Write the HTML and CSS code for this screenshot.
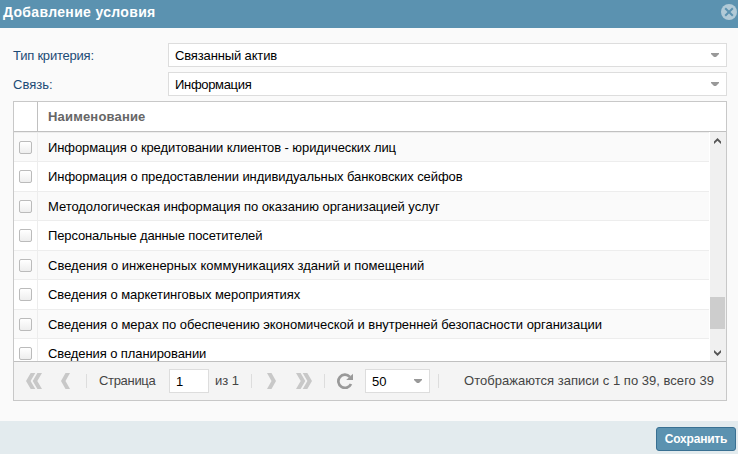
FILE: index.html
```
<!DOCTYPE html>
<html lang="ru">
<head>
<meta charset="utf-8">
<title>Добавление условия</title>
<link rel="stylesheet" href="styles.css">
</head>
<body>
<header class="titlebar">
  <h1>Добавление условия</h1>
  <svg class="close" width="16" height="16" viewBox="0 0 16 16"><circle cx="8" cy="8" r="8" fill="#b1cad7"/><path d="M4.2 4.2l7.6 7.6M11.8 4.2l-7.6 7.6" stroke="#5b92b0" stroke-width="2"/></svg>
</header>
<main class="content">
  <div class="field"><label class="t22">Тип критерия:</label><div class="combo"><span class="t13">Связанный актив</span><svg width="8" height="4"><path d="M0 0h8v1L5 4H3L0 1z" fill="#999"/></svg></div></div>
  <div class="field"><label>Связь:</label><div class="combo"><span class="t30">Информация</span><svg width="8" height="4"><path d="M0 0h8v1L5 4H3L0 1z" fill="#999"/></svg></div></div>
  <section class="grid">
    <div class="grid-head"><div class="head-check"></div><div class="head-name">Наименование</div></div>
    <div class="grid-view">
      <div class="rows">
        <div class="row alt"><div class="check"><i></i></div><div class="name t09">Информация о кредитовании клиентов - юридических лиц</div></div>
        <div class="row tall"><div class="check"><i></i></div><div class="name t07">Информация о предоставлении индивидуальных банковских сейфов</div></div>
        <div class="row alt"><div class="check"><i></i></div><div class="name t05">Методологическая информация по оказанию организацией услуг</div></div>
        <div class="row tall"><div class="check"><i></i></div><div class="name t13">Персональные данные посетителей</div></div>
        <div class="row alt"><div class="check"><i></i></div><div class="name">Сведения о инженерных коммуникациях зданий и помещений</div></div>
        <div class="row tall"><div class="check"><i></i></div><div class="name t05">Сведения о маркетинговых мероприятиях</div></div>
        <div class="row alt"><div class="check"><i></i></div><div class="name t03">Сведения о мерах по обеспечению экономической и внутренней безопасности организации</div></div>
        <div class="row tall"><div class="check"><i></i></div><div class="name t09">Сведения о планировании</div></div>
      </div>
      <div class="scroll">
        <svg width="7" height="6"><path d="M0 6V3.5L3.5 0 7 3.5V6L3.5 2.8z" fill="#555"/></svg>
        <div class="thumb"></div>
        <svg width="7" height="6"><path d="M0 0V2.5L3.5 6 7 2.5V0L3.5 3.2z" fill="#555"/></svg>
      </div>
    </div>
    <div class="pager">
      <svg class="first" width="16" height="16"><path d="M4.7 0h4.6L4.6 8l4.7 8H4.7L0 8zM11.4 0H16l-4.7 8 4.7 8h-4.6L6.7 8z" fill="#c8c8c8"/></svg>
      <svg class="prev" width="9" height="16"><path d="M4.5 0H9L4.5 8 9 16H4.5L0 8z" fill="#c8c8c8"/></svg>
      <span class="sep s1"></span>
      <span class="page-label t30">Страница</span>
      <div class="page">1</div>
      <span class="of">из 1</span>
      <span class="sep s2"></span>
      <svg class="next" width="9" height="16"><path d="M0 0h4.5L9 8l-4.5 8H0l4.5-8z" fill="#c8c8c8"/></svg>
      <svg class="last" width="16" height="16"><path d="M0 0h4.6l4.7 8-4.7 8H0l4.7-8zM6.7 0h4.6L16 8l-4.7 8H6.7l4.7-8z" fill="#c8c8c8"/></svg>
      <span class="sep s3"></span>
      <svg class="refresh" width="16" height="16"><path d="M12.8 3.8A6.6 6.6 0 1 0 14 11" fill="none" stroke="#999" stroke-width="2.7"/><path d="M16 .7V7H9.2z" fill="#999"/></svg>
      <div class="combo size"><span>50</span><svg width="8" height="4"><path d="M0 0h8v1L5 4H3L0 1z" fill="#999"/></svg></div>
      <span class="sep s4"></span>
      <span class="status">Отображаются записи с 1 по 39, всего 39</span>
    </div>
  </section>
</main>
<footer><button>Сохранить</button></footer>
</body>
</html>
```
FILE: styles.css
```
* { box-sizing: border-box; }
body { margin: 0; width: 738px; height: 454px; overflow: hidden; display: flex; flex-direction: column; background: #fafafa; color: #000; font: 13px/16px "Liberation Sans", Arial, sans-serif; }
svg { display: block; flex: none; }
span, label { white-space: nowrap; }
.titlebar { height: 28px; flex: none; display: flex; justify-content: space-between; padding: 4px 1px 0 3px; background: #5b92b0; }
h1 { margin: 0; color: #fff; font-size: 14px; line-height: 17px; letter-spacing: .33px; }
.content { height: 393px; padding: 15px 11px 0 13px; }
.field { display: flex; align-items: center; height: 24px; margin-bottom: 5px; }
.field label { width: 155px; padding-top: 2px; color: #1c4b76; }
.combo { flex: 1; height: 24px; display: flex; align-items: center; justify-content: space-between; padding: 0 7px 0 6px; border: 1px solid #ddd; background: #fff; }
.combo span { padding-top: 2px; }
.grid { height: 300px; border: 1px solid #c8c8c8; background: #fff; }
.grid-head { height: 30px; display: flex; border-bottom: 1px solid #c0c0c0; }
.head-check { width: 24px; border-right: 1px solid #c0c0c0; }
.head-name { padding: 7px 10px; color: #666; font-weight: bold; letter-spacing: .18px; }
.grid-view { height: 229px; display: flex; overflow: hidden; }
.rows { flex: 1; margin-right: 1px; border-top: 1px solid #ededed; }
.row { height: 29px; display: flex; border-bottom: 1px solid #ededed; background: #fff; }
.tall { height: 30px; }
.alt { background: #fafafa; }
.check { width: 24px; padding: 8px 0 0 5px; border-right: 1px solid #ededed; }
.check i { display: block; width: 13px; height: 13px; border: 1px solid #bbb; border-radius: 2px; background: linear-gradient(#fff, #eee); }
.name { padding: 7px 0 0 10px; white-space: nowrap; }
.t03 { letter-spacing: -.036px; }
.t05 { letter-spacing: -.055px; }
.t07 { letter-spacing: -.07px; }
.t09 { letter-spacing: -.09px; }
.t13 { letter-spacing: -.14px; }
.t22 { letter-spacing: -.22px; }
.t30 { letter-spacing: -.32px; }
.scroll { width: 16px; display: flex; flex-direction: column; padding: 6px 1px 5px 0; background: #f0f0f0; }
.scroll svg { margin-left: 4px; }
.thumb { width: 15px; height: 32px; margin: 153px 0 21px; background: #cdcdcd; }
.pager { height: 39px; display: flex; align-items: center; padding: 0 12px; border-top: 1px solid #c0c0c0; background: #f4f4f4; color: #444; }
.pager > * { flex: none; }
.sep { width: 1px; height: 14px; background: #ddd; }
.prev { margin-left: 19px; }
.s1 { margin: 0 12px 0 16px; }
.page-label { width: 70px; }
.page { width: 40px; height: 24px; padding: 4px 6px; border: 1px solid #ddd; background: #fff; color: #000; }
.of { width: 36px; margin-left: 6px; }
.next { margin-left: 15px; }
.last { margin-left: 20px; }
.s3 { margin: 0 12px; }
.pager .size { flex: none; width: 65px; margin-left: 12px; color: #000; }
.s4 { margin-left: 8px; }
.status { margin-left: 25px; letter-spacing: .025px; }
footer { height: 33px; display: flex; justify-content: flex-end; padding: 6px 2px 0; background: #e3ebee; }
button { width: 80px; height: 24px; padding: 0; border: 1px solid #397092; border-radius: 3px; background: #5b92b0; color: #fff; font: bold 12px/16px "Liberation Sans", Arial, sans-serif; letter-spacing: -.2px; }
```
